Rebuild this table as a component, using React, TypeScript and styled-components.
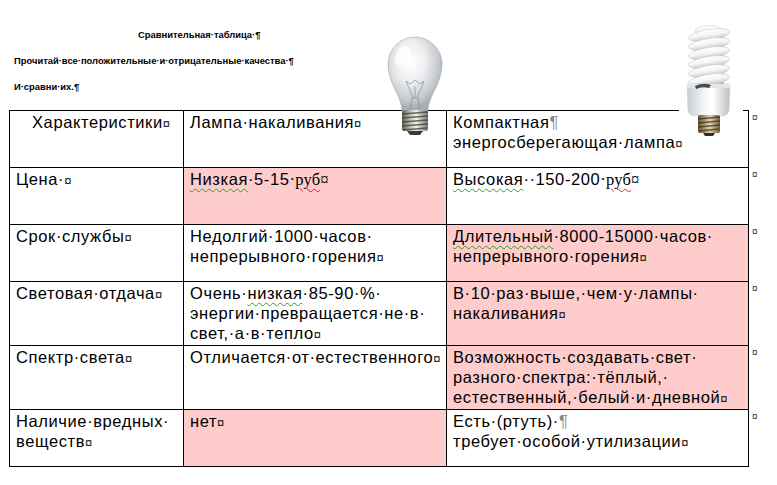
import React from 'react';
import styled, { createGlobalStyle } from 'styled-components';

const GlobalStyle = createGlobalStyle`
  html, body {
    margin: 0;
    padding: 0;
    background: #fff;
  }
  body {
    font-family: "Liberation Sans", Arial, sans-serif;
    color: #000;
  }
`;

const Page = styled.div`
  position: relative;
  width: 777px;
  height: 485px;
  overflow: hidden;
  padding: 22px 0 0 9px;
  box-sizing: border-box;
`;

const Header = styled.div`
  display: flex;
  flex-direction: column;
  margin-bottom: 10px;
`;

const HeadLine = styled.div<{ $left?: number }>`
  height: 26px;
  line-height: 26px;
  padding-left: ${p => p.$left ?? 5}px;
  font-family: "Liberation Sans", Arial, sans-serif;
  font-weight: bold;
  font-size: 9.4px;
  white-space: nowrap;
`;

const Table = styled.table`
  border-collapse: collapse;
  table-layout: fixed;
  font-size: 16.5px;
  letter-spacing: 0.6px;
  line-height: 20px;
`;

const Row = styled.tr<{ $h: number }>`
  height: ${p => p.$h}px;
`;

const Cell = styled.td<{ $shade?: boolean; $indent?: number }>`
  border: 1px solid #000;
  background: ${p => (p.$shade ? '#ffcccc' : '#fff')};
  padding: 1px 2px 0 ${p => p.$indent ?? 6}px;
  vertical-align: top;
  white-space: nowrap;
  overflow: hidden;
`;

const RowEnd = styled.td`
  border: none;
  padding: 0 0 0 3px;
  vertical-align: top;
  font-size: 10px;
  line-height: 14px;
  color: #333;
`;

const Mark = styled.span`
  font-size: 13px;
  letter-spacing: 0;
  color: #111;
`;

const Pilcrow = styled.span`
  color: #8a8a8a;
`;

const Serif = styled.span`
  font-family: "Liberation Serif", "Times New Roman", serif;
  letter-spacing: 0.2px;
`;

const Spell = styled.span<{ $kind: 'grammar' | 'spelling' }>`
  text-decoration-line: underline;
  text-decoration-style: wavy;
  text-decoration-color: ${p => (p.$kind === 'grammar' ? '#2e9d2e' : '#e02020')};
  text-decoration-thickness: 1px;
  text-underline-offset: 3px;
`;

const Picture = styled.svg<{ $left: number; $top: number }>`
  position: absolute;
  left: ${p => p.$left}px;
  top: ${p => p.$top}px;
  display: block;
`;

const End = () => <Mark>¤</Mark>;

const IncandescentBulb = () => (
  <Picture $left={379} $top={34} width={72} height={104} viewBox="0 0 72 104">
    <defs>
      <radialGradient id="glass" cx="42%" cy="34%" r="62%">
        <stop offset="0" stopColor="#ffffff" />
        <stop offset="0.45" stopColor="#eceef0" />
        <stop offset="0.85" stopColor="#c3c7cb" />
        <stop offset="1" stopColor="#a9aeb3" />
      </radialGradient>
      <linearGradient id="brass" x1="0" x2="1" y1="0" y2="0">
        <stop offset="0" stopColor="#5e5e54" />
        <stop offset="0.35" stopColor="#c9c9bd" />
        <stop offset="0.55" stopColor="#efefe6" />
        <stop offset="1" stopColor="#75756b" />
      </linearGradient>
    </defs>
    <path
      d="M23 77 C23 62 9 50 9 30 A27 27 0 0 1 63 30 C63 50 49 62 49 77 Z"
      fill="url(#glass)"
      stroke="#a6abb0"
      strokeWidth="0.6"
    />
    <ellipse cx="24" cy="22" rx="7" ry="11" fill="#ffffff" opacity="0.7" transform="rotate(25 24 22)" />
    <g stroke="#8c8c8c" strokeWidth="0.7" fill="none">
      <path d="M31 77 L33 64 L39 64 L41 77" />
      <path d="M34 64 L27 47" />
      <path d="M38 64 L45 47" />
      <path d="M36 64 L36 52" />
      <path d="M27 47 L31 50 L36 46 L41 50 L45 47" />
    </g>
    <rect x="23" y="76" width="26" height="21" rx="2" fill="url(#brass)" />
    <g stroke="#3d3d35" strokeWidth="1.3" opacity="0.75">
      <path d="M23 80 L49 78" />
      <path d="M23 84 L49 82" />
      <path d="M23 88 L49 86" />
      <path d="M23 92 L49 90" />
      <path d="M24 96 L48 94" />
    </g>
    <path d="M28 97 L44 97 L41 101 L31 101 Z" fill="#3a3a3a" />
  </Picture>
);

const coils = [11, 20, 29, 38, 47, 56];

const CompactBulb = () => (
  <Picture $left={679} $top={24} width={64} height={112} viewBox="0 0 64 112">
    <defs>
      <linearGradient id="tube" x1="0" x2="0" y1="0" y2="1">
        <stop offset="0" stopColor="#ffffff" />
        <stop offset="0.5" stopColor="#f3f5f6" />
        <stop offset="1" stopColor="#bfc4c8" />
      </linearGradient>
      <linearGradient id="housing" x1="0" x2="1" y1="0" y2="0">
        <stop offset="0" stopColor="#c9cdd0" />
        <stop offset="0.4" stopColor="#f4f5f5" />
        <stop offset="0.6" stopColor="#ffffff" />
        <stop offset="1" stopColor="#bcc1c5" />
      </linearGradient>
      <linearGradient id="screw" x1="0" x2="1" y1="0" y2="0">
        <stop offset="0" stopColor="#5f5134" />
        <stop offset="0.35" stopColor="#b9a57a" />
        <stop offset="0.55" stopColor="#e3d5ae" />
        <stop offset="1" stopColor="#6d5a38" />
      </linearGradient>
    </defs>
    <rect x="0" y="0" width="64" height="112" fill="#fff" />
    <rect x="16" y="8" width="29" height="52" fill="#b4b9bd" />
    <ellipse cx="30" cy="7" rx="14" ry="5.5" fill="url(#tube)" stroke="#c9cdd1" strokeWidth="0.5" />
    {coils.map(cy => (
      <ellipse
        key={cy}
        cx="30"
        cy={cy}
        rx="21"
        ry="5.6"
        fill="url(#tube)"
        stroke="#c0c5c9"
        strokeWidth="0.5"
        transform={`rotate(-9 30 ${cy})`}
      />
    ))}
    <path d="M8 60 L51 60 L50 86 Q49 92 43 92 L17 92 Q10 92 9 86 Z" fill="url(#housing)" stroke="#c6cace" strokeWidth="0.5" />
    <path d="M8 60 L51 60 L51 64 L8 64 Z" fill="#e2e5e7" />
    <path d="M16 62 Q24 58 32 61 L30 64 Q23 62 17 65 Z" fill="#4a4d50" />
    <rect x="19" y="91" width="22" height="18" rx="2" fill="url(#screw)" />
    <g stroke="#3b3222" strokeWidth="1.3" opacity="0.75">
      <path d="M19 95 L41 93" />
      <path d="M19 99 L41 97" />
      <path d="M19 103 L41 101" />
      <path d="M20 107 L40 105" />
    </g>
    <path d="M24 109 L36 109 L34 112 L26 112 Z" fill="#2f2f2f" />
  </Picture>
);

export default function App() {
  return (
    <>
      <GlobalStyle />
      <Page>
        <Header>
          <HeadLine $left={129}>Сравнительная·таблица·¶</HeadLine>
          <HeadLine>Прочитай·все·положительные·и·отрицательные·качества·¶</HeadLine>
          <HeadLine>И·сравни·их.¶</HeadLine>
        </Header>
        <Table>
          <colgroup>
            <col style={{ width: 174 }} />
            <col style={{ width: 263 }} />
            <col style={{ width: 302 }} />
            <col style={{ width: 20 }} />
          </colgroup>
          <tbody>
            <Row $h={57}>
              <Cell $indent={22}>
                Характеристики<End />
              </Cell>
              <Cell>
                Лампа·накаливания<End />
              </Cell>
              <Cell>
                Компактная<Pilcrow>¶</Pilcrow>
                <br />
                энергосберегающая·лампа<End />
              </Cell>
              <RowEnd>¤</RowEnd>
            </Row>
            <Row $h={57}>
              <Cell>
                Цена·<End />
              </Cell>
              <Cell $shade>
                <Spell $kind="grammar">Низкая</Spell>·5-15<Serif>·<Spell $kind="spelling">руб</Spell>¤</Serif>
              </Cell>
              <Cell>
                <Spell $kind="grammar">Высокая</Spell>··150-200<Serif>·<Spell $kind="spelling">руб</Spell>¤</Serif>
              </Cell>
              <RowEnd>¤</RowEnd>
            </Row>
            <Row $h={57}>
              <Cell>
                Срок·службы<End />
              </Cell>
              <Cell>
                Недолгий·1000·часов·
                <br />
                непрерывного·горения<End />
              </Cell>
              <Cell $shade>
                <Spell $kind="grammar">Длительный</Spell>·8000-15000·часов·
                <br />
                непрерывного·горения<End />
              </Cell>
              <RowEnd>¤</RowEnd>
            </Row>
            <Row $h={63}>
              <Cell>
                Световая·отдача<End />
              </Cell>
              <Cell>
                Очень·<Spell $kind="grammar">низкая</Spell>·85-90·%·
                <br />
                энергии·превращается·не·в·
                <br />
                свет,·а·в·тепло<End />
              </Cell>
              <Cell $shade>
                В·10·раз·выше,·чем·у·лампы·
                <br />
                накаливания<End />
              </Cell>
              <RowEnd>¤</RowEnd>
            </Row>
            <Row $h={62}>
              <Cell>
                Спектр·света<End />
              </Cell>
              <Cell>
                Отличается·от·естественного<End />
              </Cell>
              <Cell $shade>
                Возможность·создавать·свет·
                <br />
                разного·спектра:·тёплый,·
                <br />
                естественный,·белый·и·дневной<End />
              </Cell>
              <RowEnd>¤</RowEnd>
            </Row>
            <Row $h={57}>
              <Cell>
                Наличие·вредных·
                <br />
                веществ<End />
              </Cell>
              <Cell $shade>
                нет<End />
              </Cell>
              <Cell>
                Есть·(ртуть)·<Pilcrow>¶</Pilcrow>
                <br />
                требует·особой·утилизации<End />
              </Cell>
              <RowEnd>¤</RowEnd>
            </Row>
          </tbody>
        </Table>
        <IncandescentBulb />
        <CompactBulb />
      </Page>
    </>
  );
}
